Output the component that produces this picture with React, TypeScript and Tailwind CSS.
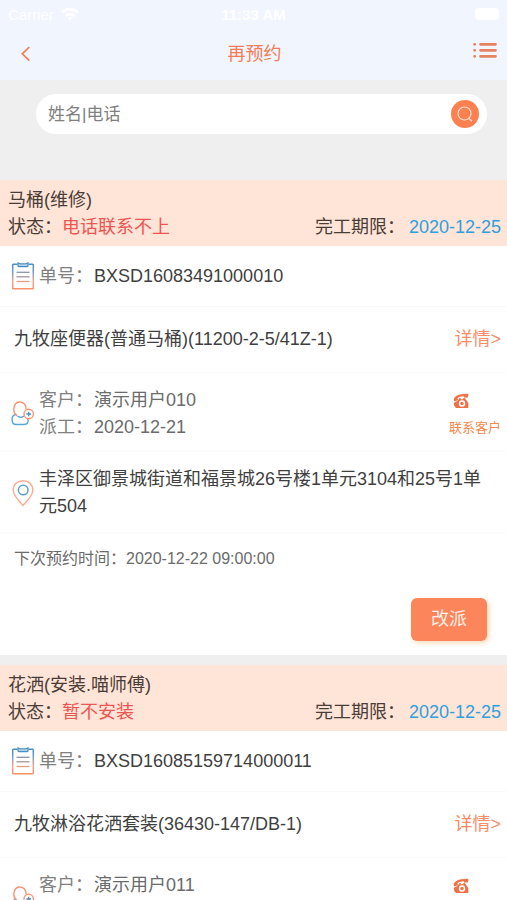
import { useState } from 'react'

type Order = {
  title: string
  status: string
  deadline: string
  orderNo: string
  product: string
  customer: string
  dispatched: string
  address?: string
  nextVisit?: string
}

const orders: Order[] = [
  {
    title: '马桶(维修)',
    status: '电话联系不上',
    deadline: '2020-12-25',
    orderNo: 'BXSD16083491000010',
    product: '九牧座便器(普通马桶)(11200-2-5/41Z-1)',
    customer: '演示用户010',
    dispatched: '2020-12-21',
    address: '丰泽区御景城街道和福景城26号楼1单元3104和25号1单元504',
    nextVisit: '2020-12-22 09:00:00',
  },
  {
    title: '花洒(安装.喵师傅)',
    status: '暂不安装',
    deadline: '2020-12-25',
    orderNo: 'BXSD16085159714000011',
    product: '九牧淋浴花洒套装(36430-147/DB-1)',
    customer: '演示用户011',
    dispatched: '2020-12-21',
  },
]

function WifiIcon() {
  return (
    <svg className="h-4 w-5" viewBox="0 0 20 16" fill="none" stroke="#fff" strokeWidth="3" aria-hidden="true">
      <path d="M2 6.5C6.500 2 13.500 2 18 6.500" />
      <path d="M5.500 10C8 7.500 12 7.500 14.500 10" />
      <path d="M10 14.500L7.500 12C9 10.800 11 10.800 12.500 12Z" fill="#fff" stroke="none" />
    </svg>
  )
}

function ClipboardIcon() {
  return (
    <svg className="h-7 w-6" viewBox="0 0 24 28" fill="none" aria-hidden="true">
      <defs>
        <linearGradient id="clip" x1="0" y1="0" x2="0" y2="28" gradientUnits="userSpaceOnUse">
          <stop offset="0.100" stopColor="#4a8fc4" />
          <stop offset="0.350" stopColor="#6f9fc8" />
          <stop offset="0.700" stopColor="#f3a58c" />
          <stop offset="1" stopColor="#f98d68" />
        </linearGradient>
      </defs>
      <path d="M6.500 2.300H2.500Q1.700 2.300 1.700 3.100V26Q1.700 26.800 2.500 26.800H21.500Q22.300 26.800 22.300 26V3.100Q22.300 2.300 21.500 2.300H17.500" stroke="url(#clip)" strokeWidth="1.500" />
      <path d="M7 1V3.700Q7 4.500 7.800 4.500H16.200Q17 4.500 17 3.700V1L15 1.800H9Z" stroke="#4a8fc4" strokeWidth="1.300" fill="#d5e6f3" />
      <path d="M5.500 10.300H18.500" stroke="#8b93a8" strokeWidth="1.300" />
      <path d="M5.500 14.800H18.500" stroke="#a3919a" strokeWidth="1.300" />
      <path d="M5.500 19.500H18.500" stroke="#e79a86" strokeWidth="1.300" />
    </svg>
  )
}

function CustomerIcon() {
  return (
    <svg className="h-7 w-6" viewBox="0 0 24 28" fill="none" strokeWidth="1.400" aria-hidden="true">
      <path d="M5.500 14.500H4.500C-0.300 15.500 0 24.500 5 24.500H13C17.200 24.500 18 20.500 16.500 18.500" stroke="#59a5d3" />
      <path d="M6.500 16.200C9 17.800 11.500 17.500 13 16" stroke="#59a5d3" />
      <path d="M6.200 15.800C0.500 11.500 2.500 2 9 2C13 2 15.300 5.500 15 9.300" stroke="#fa9270" />
      <circle cx="17.700" cy="14" r="4.700" stroke="#fa9270" />
      <path d="M17.700 11.700V16.300M15.400 14H20" stroke="#4a8fc4" strokeWidth="1.300" />
    </svg>
  )
}

function PinIcon() {
  return (
    <svg className="h-7 w-6" viewBox="0 0 24 28" fill="none" aria-hidden="true">
      <path d="M12 26.500C8 22 2.200 16.800 2.200 11.300C2.200 5.500 6.500 1.700 12 1.700S21.800 5.500 21.800 11.300C21.800 16.800 16 22 12 26.500Z" stroke="#fbab91" strokeWidth="1.400" />
      <circle cx="12.200" cy="11" r="4.800" stroke="#5a9fd0" strokeWidth="1.500" />
    </svg>
  )
}

function PhoneIcon() {
  return (
    <svg className="h-4 w-4" viewBox="0 0 16 16" fill="#ee7248" aria-hidden="true">
      <path d="M0.800 7.500C0.500 3 5.500 0.800 14.200 0.700C15.200 0.700 15.500 1.300 15.300 2.500L14.800 4.500L11 4.600L10.700 3.200C8 3.200 5.800 4 4.500 5.300L5 7L1.800 8.600Z" />
      <path fillRule="evenodd" d="M5.500 6.500L6.500 5H7.700V6.300H10.300V5H11.800L15.300 10V15H3C1.200 13.600 0.800 12 0.900 9.800L3.500 8.600ZM9 7.300A3.200 3.200 0 1 0 9 13.700A3.200 3.200 0 1 0 9 7.300Z" />
      <circle cx="9" cy="10.500" r="1.700" />
    </svg>
  )
}

function OrderCard({ order }: { order: Order }) {
  return (
    <article className="mb-2.5 bg-white">
      <header className="bg-[#ffe4d8] pt-[7px] pr-1.5 pb-[5px] pl-2 text-[#4a3c36]">
        <h2>{order.title}</h2>
        <div className="flex justify-between">
          <p>
            状态：<span className="text-[#ee5450]">{order.status}</span>
          </p>
          <p className="flex gap-1">
            完工期限：<span className="text-[#30a0dc]">{order.deadline}</span>
          </p>
        </div>
      </header>

      <div className="flex items-center gap-1 border-b border-[#f8f8f8] py-4 pr-3 pl-[11px]">
        <ClipboardIcon />
        <p className="flex gap-px">
          <span className="text-[#808080]">单号：</span>
          {order.orderNo}
        </p>
      </div>

      <div className="flex items-center justify-between border-b border-[#fbfbfb] py-[19px] pr-1.5 pl-3.5">
        <p>{order.product}</p>
        <a href="#detail" className="shrink-0 text-[#fc8b66]">详情&gt;</a>
      </div>

      <div className="flex items-center gap-1 border-b border-[#f8f8f8] pt-3.5 pr-1.5 pb-2.5 pl-[11px] text-[#6b6b6b]">
        <CustomerIcon />
        <div className="flex-1">
          <p className="flex gap-px">
            <span className="text-[#808080]">客户：</span>
            {order.customer}
          </p>
          <p className="flex gap-px">
            <span className="text-[#808080]">派工：</span>
            {order.dispatched}
          </p>
        </div>
        <button type="button" className="flex flex-col items-center text-[13px] text-[#f5894c]">
          <span className="flex h-[27px] items-center pr-7">
            <PhoneIcon />
          </span>
          联系客户
        </button>
      </div>

      {order.address && (
        <div className="flex items-center gap-1 border-b border-[#f8f8f8] pt-3.5 pr-3 pb-3 pl-[11px]">
          <span className="shrink-0">
            <PinIcon />
          </span>
          <p>{order.address}</p>
        </div>
      )}

      {order.nextVisit && (
        <>
          <p className="px-3.5 py-3 text-base/[27px] text-[#6b6b6b]">下次预约时间：{order.nextVisit}</p>
          <div className="flex justify-end px-5 py-3.5">
            <button type="button" className="rounded-md bg-[#fc855b] px-5 py-2 text-[#fff0e8] shadow-[2px_2px_5px_#fcd9b8]">
              改派
            </button>
          </div>
        </>
      )}
    </article>
  )
}

export default function App() {
  const [keyword, setKeyword] = useState('')

  return (
    <div className="flex h-screen flex-col bg-[#efefef] font-['Liberation_Sans','Noto_Sans_CJK_SC',sans-serif] text-lg/[27px] text-[#3f3f3f]">
      <div className="bg-[#f1f5fe]">
        <div className="grid h-7 grid-cols-3 items-center px-2 text-[15px] text-white">
          <span className="flex items-center gap-1.5">
            Carrier <WifiIcon />
          </span>
          <span className="text-center font-bold">11:33 AM</span>
          <span className="h-3 w-6 justify-self-end rounded-sm bg-white" />
        </div>
        <nav className="flex h-[52px] items-center justify-between pr-2.5 pl-4">
          <button type="button" aria-label="返回">
            <svg className="h-5 w-5" viewBox="0 0 20 20" fill="none" stroke="#f27d57" strokeWidth="1.700" aria-hidden="true">
              <path d="M13.300 3L6.300 9.800L13.300 16.600" />
            </svg>
          </button>
          <h1 className="text-[#f27d57]">再预约</h1>
          <button type="button" aria-label="菜单">
            <svg className="h-6 w-6" viewBox="0 0 24 24" fill="none" stroke="#e98160" strokeWidth="2.800" strokeLinecap="round" aria-hidden="true">
              <path d="M7.500 2.300H22.500M7.500 8.300H22.500M7.500 14.300H22.500" />
              <path d="M1.600 2.300H1.700M1.600 8.300H1.700M1.600 14.300H1.700" />
            </svg>
          </button>
        </nav>
      </div>

      <form className="mt-3.5 mr-5 mb-[46px] ml-9 flex h-10 shrink-0 items-center rounded-full bg-white pr-2 pl-3" onSubmit={(e) => e.preventDefault()}>
        <input
          type="text"
          aria-label="姓名|电话"
          placeholder="姓名|电话"
          value={keyword}
          onChange={(e) => setKeyword(e.target.value)}
          className="min-w-0 flex-1 text-[17px] outline-none placeholder:text-[#808080]"
        />
        <button type="submit" aria-label="搜索" className="flex h-7 w-7 items-center justify-center rounded-full bg-[#fc8050]">
          <svg className="h-4 w-4" viewBox="0 0 16 16" fill="none" stroke="#ffe0d2" strokeWidth="1.200" aria-hidden="true">
            <circle cx="7.500" cy="7.500" r="6.500" />
            <path d="M11.300 12L15 15.300" />
          </svg>
        </button>
      </form>

      <main className="min-h-0 flex-1 overflow-y-auto [scrollbar-width:none]">
        {orders.map((order) => (
          <OrderCard key={order.orderNo} order={order} />
        ))}
      </main>
    </div>
  )
}
